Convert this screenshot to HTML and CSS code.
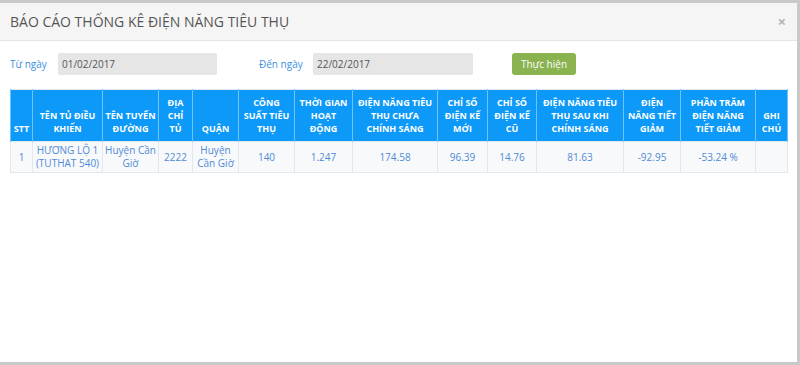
FILE: index.html
```html
<!DOCTYPE html>
<html lang="vi">
<head>
<meta charset="utf-8">
<title>Báo cáo thống kê điện năng tiêu thụ</title>
<link rel="stylesheet" href="styles.css">
</head>
<body>
<div class="modal">
  <div class="modal-header">
    <h4 class="modal-title">BÁO CÁO THỐNG KÊ ĐIỆN NĂNG TIÊU THỤ</h4>
    <span class="close">×</span>
  </div>
  <div class="filter">
    <span class="lbl lbl-from">Từ ngày</span>
    <div class="input input-from">01/02/2017</div>
    <span class="lbl lbl-to">Đến ngày</span>
    <div class="input input-to">22/02/2017</div>
    <button class="btn">Thực hiện</button>
  </div>
  <table class="report">
    <colgroup>
      <col class="c22"><col class="c70"><col class="c56"><col class="c34">
      <col class="c46"><col class="c56"><col class="c58"><col class="c85">
      <col class="c50"><col class="c49"><col class="c87"><col class="c57">
      <col class="c75"><col class="c32">
    </colgroup>
    <thead>
      <tr>
        <th>STT</th>
        <th>TÊN TỦ ĐIỀU<br>KHIỂN</th>
        <th>TÊN TUYẾN<br>ĐƯỜNG</th>
        <th>ĐỊA<br>CHỈ<br>TỦ</th>
        <th>QUẬN</th>
        <th>CÔNG<br>SUẤT TIÊU<br>THỤ</th>
        <th>THỜI GIAN<br>HOẠT<br>ĐỘNG</th>
        <th>ĐIỆN NĂNG TIÊU<br>THỤ CHƯA<br>CHÍNH SÁNG</th>
        <th>CHỈ SỐ<br>ĐIỆN KẾ<br>MỚI</th>
        <th>CHỈ SỐ<br>ĐIỆN KẾ<br>CŨ</th>
        <th>ĐIỆN NĂNG TIÊU<br>THỤ SAU KHI<br>CHÍNH SÁNG</th>
        <th>ĐIỆN<br>NĂNG TIẾT<br>GIẢM</th>
        <th>PHẦN TRĂM<br>ĐIỆN NĂNG<br>TIẾT GIẢM</th>
        <th>GHI<br>CHÚ</th>
      </tr>
    </thead>
    <tbody>
      <tr>
        <td>1</td>
        <td>HƯƠNG LỘ 1<br>(TUTHAT 540)</td>
        <td>Huyện Cần<br>Giờ</td>
        <td>2222</td>
        <td>Huyện<br>Cần Giờ</td>
        <td>140</td>
        <td>1.247</td>
        <td>174.58</td>
        <td>96.39</td>
        <td>14.76</td>
        <td>81.63</td>
        <td>-92.95</td>
        <td>-53.24 %</td>
        <td></td>
      </tr>
    </tbody>
  </table>
</div>
</body>
</html>
```

FILE: styles.css
```css
html, body {
  margin: 0;
  padding: 0;
}
body {
  background: #c9c9c9;
  font-family: "Open Sans", "Noto Sans", sans-serif;
  width: 800px;
  height: 365px;
  overflow: hidden;
}
.modal {
  margin: 3px 3px 0 0;
  height: 359px;
  background: #ffffff;
  overflow: hidden;
}
.modal-header {
  height: 37px;
  background: #f5f5f5;
  border-bottom: 1px solid #e4e4e4;
  display: flex;
  align-items: center;
  justify-content: space-between;
  padding: 0 11px 0 10px;
}
.modal-title {
  margin: 0;
  font-size: 14px;
  font-weight: 400;
  color: #555555;
}
.close {
  font-size: 15px;
  font-weight: 700;
  color: #b5b5b5;
  line-height: 1;
}
.filter {
  display: flex;
  align-items: center;
  padding: 12px 10px 0 10px;
  height: 22px;
}
.lbl {
  font-size: 10px;
  color: #3d8fe0;
}
.lbl-from { width: 48px; }
.lbl-to { width: 54px; margin-left: 42px; }
.input {
  height: 22px;
  box-sizing: border-box;
  background: #e6e6e6;
  border-radius: 2px;
  font-size: 10px;
  color: #555555;
  padding: 0 4px;
  display: flex;
  align-items: center;
}
.input-from { width: 159px; }
.input-to { width: 160px; }
.btn {
  margin-left: 39px;
  width: 64px;
  height: 22px;
  border: none;
  border-radius: 3px;
  background: #8ab24f;
  color: #ffffff;
  font-family: "Open Sans", "Noto Sans", sans-serif;
  font-size: 10px;
  padding: 0;
}
.report {
  margin: 14px 0 0 10px;
  width: 777px;
  table-layout: fixed;
  border-collapse: collapse;
  border: 1px solid #dfe7f0;
}
.c22 { width: 22px; }
.c32 { width: 32px; }
.c34 { width: 34px; }
.c46 { width: 46px; }
.c49 { width: 49px; }
.c50 { width: 50px; }
.c56 { width: 56px; }
.c57 { width: 57px; }
.c58 { width: 58px; }
.c70 { width: 70px; }
.c75 { width: 75px; }
.c85 { width: 85px; }
.c87 { width: 87px; }
.report th {
  background: #0c99f7;
  color: #ffffff;
  font-size: 9px;
  font-weight: 700;
  line-height: 13px;
  padding: 6px 0;
  white-space: nowrap;
  vertical-align: bottom;
  text-align: center;
  border-left: 1px solid #6ec3fb;
  border-right: 1px solid #6ec3fb;
}
.report td {
  background: #f8f9fb;
  color: #4f8ad6;
  font-size: 10px;
  line-height: 13px;
  padding: 2px 0;
  height: 26px;
  white-space: nowrap;
  text-align: center;
  vertical-align: middle;
  border: 1px solid #e1e8f0;
}
```
